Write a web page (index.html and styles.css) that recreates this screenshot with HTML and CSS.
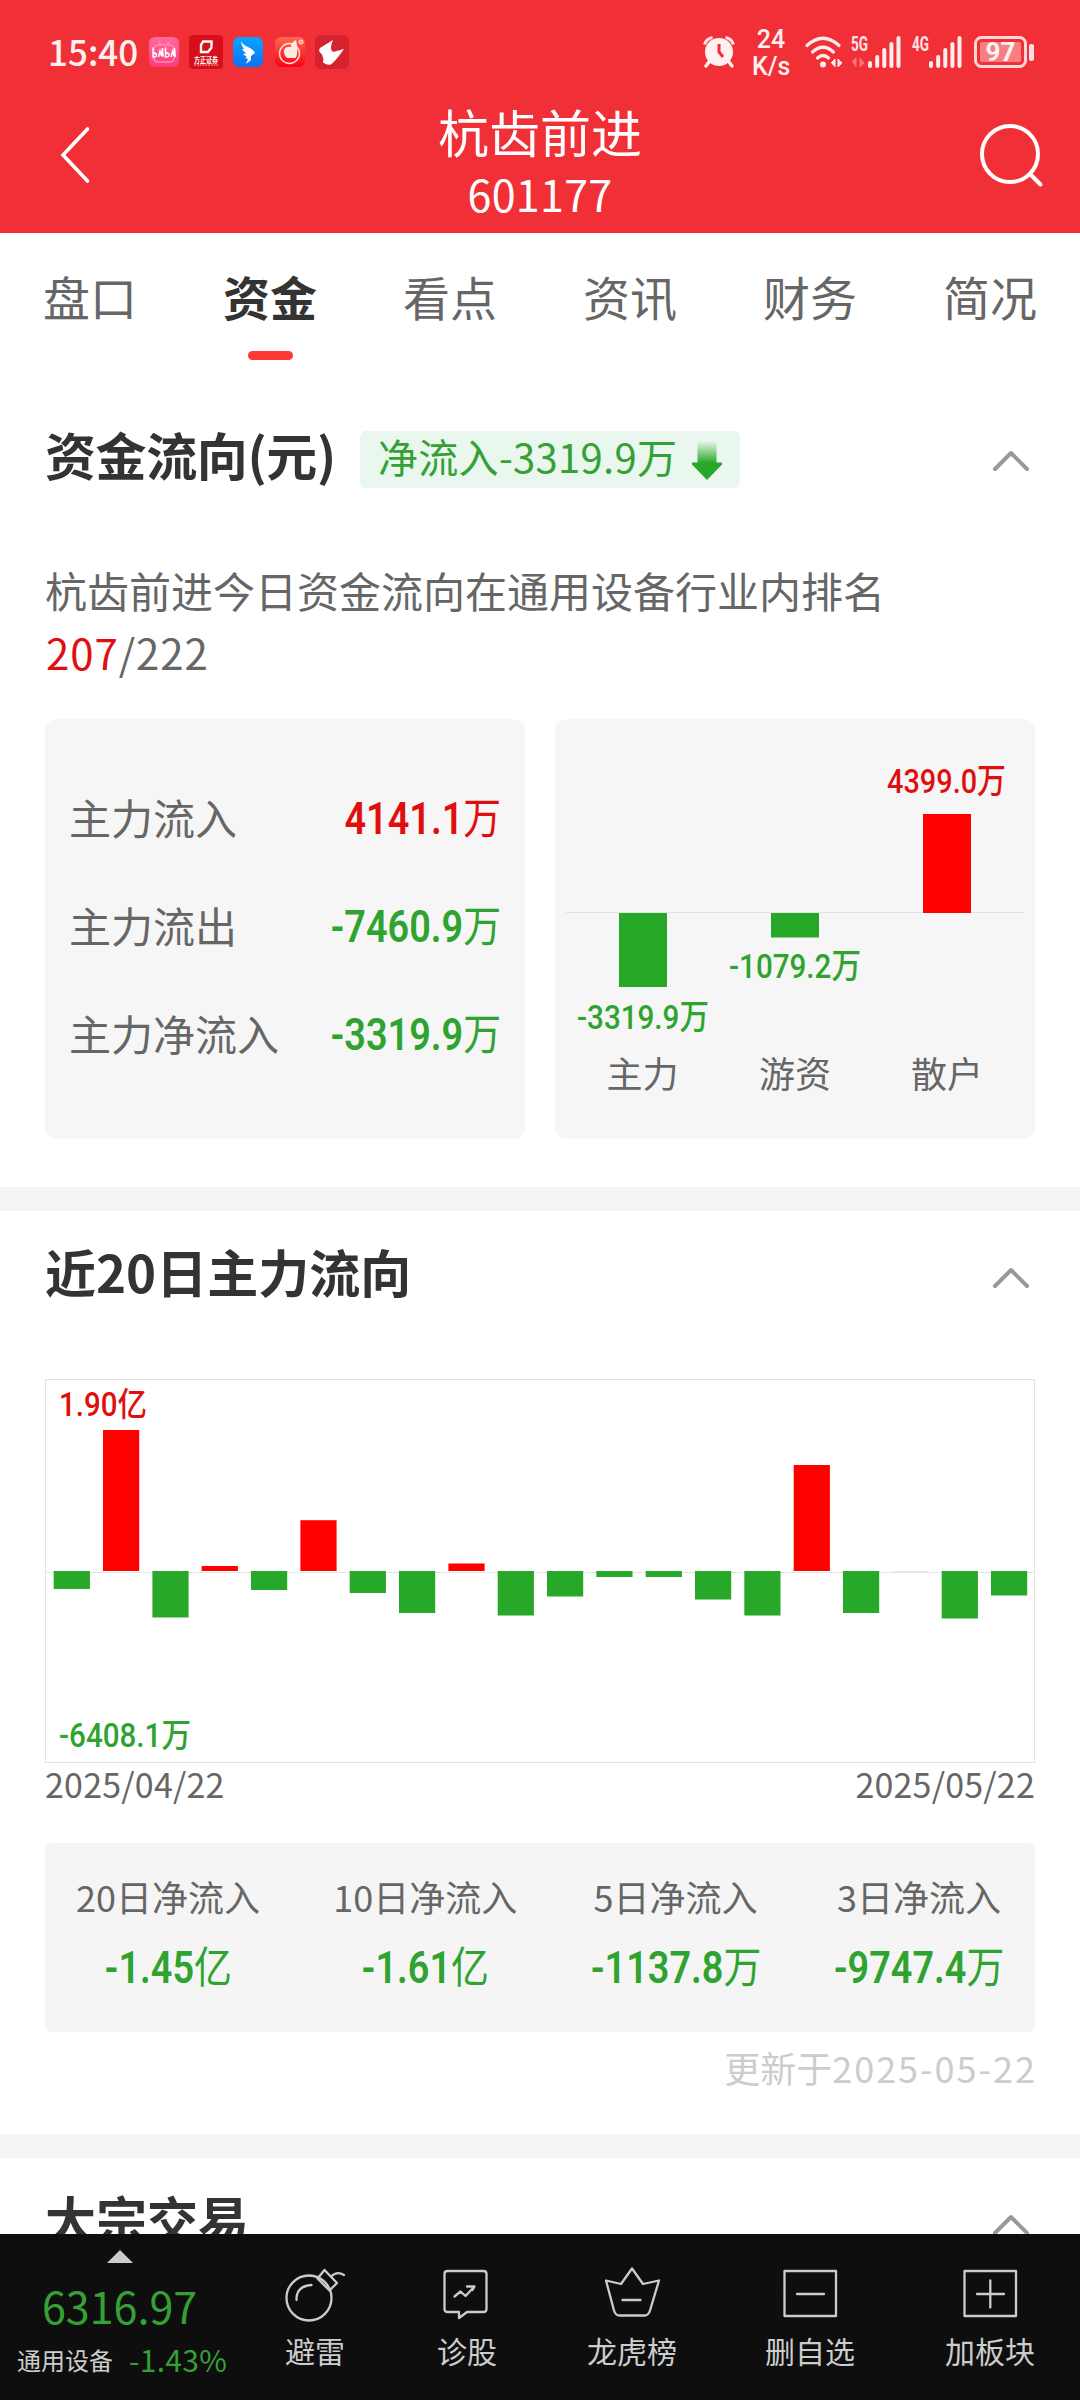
FILE: index.html
```html
<!DOCTYPE html>
<html lang="zh-CN">
<head>
<meta charset="utf-8">
<title>杭齿前进 601177</title>
<link rel="stylesheet" href="styles.css">
</head>
<body>
<div class="app">
  <header class="header">
    <div class="status">
      <div class="status-left">
        <span class="clock">15:40</span>
        <svg class="app-sm" viewBox="0 0 30 30"><defs><linearGradient id="pink" x2="0" y2="1"><stop stop-color="#ff6a9d"/><stop offset="1" stop-color="#fb3c7c"/></linearGradient></defs><rect width="30" height="30" rx="6" fill="url(#pink)"/><rect x="5" y="8" width="20" height="17" rx="4" fill="none" stroke="#ff8db4" stroke-width="1.6"/><path d="M10 5l2 3M20 5l-2 3" stroke="#ff8db4" stroke-width="1.6"/><path d="M4 10.500v9.500q4 .5 3.500-3l-3-1.500M9.500 20l1.500-6l1.500 5l1-8l.5 9M16.500 10.500v9.500q4 .5 3.500-3l-3-1.500M22 20l1.500-6l1.500 5l.5-8l.7 9" fill="none" stroke="#fff" stroke-width="1.500"/></svg>
        <svg class="app-lg" viewBox="0 0 34 34"><rect width="34" height="34" rx="4" fill="#d70f1b"/><path d="M14 6.500h8.500v6l-3.500 4.500h-7v-7z" fill="none" stroke="#fff" stroke-width="2.400"/><text x="17" y="27.500" text-anchor="middle" textLength="24" lengthAdjust="spacingAndGlyphs" class="tiny">方正证券</text><path d="M5 30h24" stroke="#f7b0b5" stroke-width="1" stroke-dasharray="2 .8"/></svg>
        <svg class="app-sm" viewBox="0 0 30 30"><defs><linearGradient id="blue" x2="0" y2="1"><stop stop-color="#0aa4ff"/><stop offset="1" stop-color="#0b72f5"/></linearGradient></defs><rect width="30" height="30" rx="6" fill="url(#blue)"/><path d="M8 4q2 4 7 6q6 3 7 6l-4 3v4l-5 4l2-5l-3-1l2-1l-4-3l3-.5l-4-4l2-.3q-3-4-3-8z" fill="#fff"/></svg>
        <svg class="app-sm" viewBox="0 0 30 30"><defs><linearGradient id="org" x2="0" y2="1"><stop stop-color="#ff6a4f"/><stop offset="1" stop-color="#fd0014"/></linearGradient></defs><rect width="30" height="30" rx="6" fill="url(#org)"/><circle cx="14.500" cy="16.500" r="10" fill="none" stroke="#ffe3dc" stroke-width="1.400"/><path d="M10 11q4-2 6-1q0-5 5-7l1 5q1 8-1 13h-9q-5-5-2-10z" fill="#ffeadf"/><circle cx="26" cy="5" r="2" fill="#ff9a8a" stroke="#fff" stroke-width=".8"/></svg>
        <svg class="app-lg" viewBox="0 0 34 34"><rect width="34" height="34" rx="6" fill="#d4222e"/><path d="M18 5L5 13q-2.500 3 2 6.500q2 4 1 8q4 3 8 2q5-4 13-15.500l-11 3q-4-3 0-12z" fill="#fff"/></svg>
      </div>
      <div class="status-right">
        <svg class="alarm" viewBox="0 0 32 32"><circle cx="16" cy="16" r="14" fill="#fff1f1"/><path d="M1.500 8.500q2-6 8-7M30.500 8.500q-2-6-8-7" stroke="#ffe3e4" stroke-width="3" fill="none"/><path d="M6 26l-3 4M26 26l3 4" stroke="#fff1f1" stroke-width="3.500" stroke-linecap="round"/><path d="M16 8v8l4 5" stroke="#f12f37" stroke-width="3" fill="none"/></svg>
        <div class="speed"><span>24</span><span>K/s</span></div>
        <svg class="wifi" viewBox="0 0 38 32"><g fill="none" stroke="#ffecec" stroke-width="3.200" stroke-linecap="round"><path d="M2 9.500Q18 -5 34 9.500"/><path d="M7.500 16Q18 6.500 28.500 16"/><path d="M12.500 22Q18 17 23.500 22"/></g><circle cx="18" cy="28.500" r="3" fill="#ffecec"/><path d="M26 27l4-4v8M33 23v8l4-4z" fill="#ffecec" stroke="#ffecec" stroke-width="1"/></svg>
        <svg class="signal" viewBox="0 0 50 32"><text x="0" y="15" textLength="17" lengthAdjust="spacingAndGlyphs" class="net">5G</text><path d="M1 26l4-4v9M9 22v9l4-4z" fill="#ff7478" stroke="#ff7478"/><path d="M19 27v3M26.200 21v9M33.300 14v16M40.400 8v22M47.500 2v28" stroke="#ffecec" stroke-width="4" stroke-linecap="round"/></svg>
        <svg class="signal four" viewBox="0 0 50 32"><text x="0" y="15" textLength="17" lengthAdjust="spacingAndGlyphs" class="net">4G</text><path d="M19 27v3M26.200 21v9M33.300 14v16M40.400 8v22M47.500 2v28" stroke="#ffecec" stroke-width="4" stroke-linecap="round"/></svg>
        <svg class="battery" viewBox="0 0 60 32"><rect x="1.500" y="1.500" width="50" height="29" rx="6" fill="none" stroke="#ffd6d8" stroke-width="3"/><rect x="6" y="6" width="41" height="20" rx="2" fill="#f67f84"/><rect x="55" y="8" width="5" height="17" rx="2" fill="#ffe0e1"/><text x="26.500" y="25" text-anchor="middle" class="bat">97</text></svg>
      </div>
    </div>
    <div class="titlebar">
      <svg class="back" viewBox="0 0 32 58"><path d="M29.500 3L5 29l24.500 26" fill="none" stroke="#fff" stroke-width="3.600" stroke-linecap="round"/></svg>
      <div class="stock"><h1>杭齿前进</h1><span>601177</span></div>
      <svg class="search" viewBox="0 0 64 64"><circle cx="31" cy="30" r="28" fill="none" stroke="#fff" stroke-width="4"/><path d="M51 50l10.500 10.500" stroke="#fff" stroke-width="4" stroke-linecap="round"/></svg>
    </div>
  </header>

  <main class="main">
    <nav class="tabs">
      <span>盘口</span><span class="active">资金</span><span>看点</span><span>资讯</span><span>财务</span><span>简况</span>
    </nav>

    <section class="flow">
      <div class="heading">
        <h2>资金流向(元)</h2>
        <div class="tag"><span>净流入-3319.9万</span>
          <svg viewBox="0 0 30 40"><defs><linearGradient id="down" x2="0" y2="1"><stop stop-color="#28a828" stop-opacity="0"/><stop offset="1" stop-color="#28a828"/></linearGradient></defs><path d="M5.500 0h19v22h-19z" fill="url(#down)"/><path d="M0 21.500h30v2L15 39L0 23.500z" fill="#28a828"/></svg>
        </div>
        <svg class="chev" viewBox="0 0 36 22"><path d="M2 20L18 4l16 16"/></svg>
      </div>
      <p class="rank">杭齿前进今日资金流向在通用设备行业内排名<br><span><b>207</b>/222</span></p>
      <div class="cards">
        <div class="card amounts">
          <div class="row"><span>主力流入</span><span class="value up">4141.1<i>万</i></span></div>
          <div class="row"><span>主力流出</span><span class="value down">-7460.9<i>万</i></span></div>
          <div class="row"><span>主力净流入</span><span class="value down">-3319.9<i>万</i></span></div>
        </div>
        <div class="card">
          <svg class="split" viewBox="0 0 480 420">
            <path d="M11 193.500h458" stroke="#e2e2e2"/>
            <path class="bar-down" d="M64 194h48v74H64zM216 194h48v24.500h-48z"/>
            <path class="bar-up" d="M368 95h48v99h-48z"/>
            <text class="din up" x="332" y="73.500" textLength="119" lengthAdjust="spacingAndGlyphs">4399.0万</text>
            <text class="din down" x="174" y="259" textLength="132" lengthAdjust="spacingAndGlyphs">-1079.2万</text>
            <text class="din down" x="22" y="310" textLength="132" lengthAdjust="spacingAndGlyphs">-3319.9万</text>
            <g class="names"><text x="87.500" y="369">主力</text><text x="240" y="369">游资</text><text x="392" y="369">散户</text></g>
          </svg>
        </div>
      </div>
    </section>

    <section class="recent">
      <div class="heading">
        <h2>近20日主力流向</h2>
        <svg class="chev" viewBox="0 0 36 22"><path d="M2 20L18 4l16 16"/></svg>
      </div>
      <svg class="history" viewBox="0 0 990 384">
        <rect x=".5" y=".5" width="989" height="383" fill="#fff" stroke="#e2e2e2"/>
        <path d="M1 193.500h988" stroke="#e4e4e4"/>
        <g class="bar-down">
          <rect x="8.700" y="192" width="36.200" height="18"/>
          <rect x="107.400" y="192" width="36.200" height="46.500"/>
          <rect x="206" y="192" width="36.200" height="19"/>
          <rect x="304.700" y="192" width="36.200" height="22"/>
          <rect x="354" y="192" width="36.200" height="42"/>
          <rect x="452.700" y="192" width="36.200" height="44.500"/>
          <rect x="502" y="192" width="36.200" height="25.500"/>
          <rect x="551.300" y="192" width="36.200" height="6"/>
          <rect x="600.700" y="192" width="36.200" height="6"/>
          <rect x="650" y="192" width="36.200" height="28.500"/>
          <rect x="699.300" y="192" width="36.200" height="44.500"/>
          <rect x="798" y="192" width="36.200" height="42"/>
          <rect x="847.300" y="192" width="36.200" height=".15"/>
          <rect x="896.700" y="192" width="36.200" height="47.500"/>
          <rect x="946" y="192" width="36.200" height="24.500"/>
        </g>
        <g class="bar-up">
          <rect x="58" y="51" width="36.200" height="141"/>
          <rect x="156.700" y="187" width="36.200" height="5"/>
          <rect x="255.400" y="141.200" width="36.200" height="50.800"/>
          <rect x="403.400" y="184.500" width="36.200" height="7.500"/>
          <rect x="748.700" y="86" width="36.200" height="106"/>
        </g>
        <text class="din small up" x="14" y="36.500" textLength="88" lengthAdjust="spacingAndGlyphs">1.90亿</text>
        <text class="din small down" x="14" y="368" textLength="132" lengthAdjust="spacingAndGlyphs">-6408.1万</text>
      </svg>
      <div class="dates"><span>2025/04/22</span><span>2025/05/22</span></div>
      <div class="sums">
        <div><span>20日净流入</span><span class="value down">-1.45<i>亿</i></span></div>
        <div><span>10日净流入</span><span class="value down">-1.61<i>亿</i></span></div>
        <div><span>5日净流入</span><span class="value down">-1137.8<i>万</i></span></div>
        <div><span>3日净流入</span><span class="value down">-9747.4<i>万</i></span></div>
      </div>
      <div class="updated">更新于<span>2025-05-22</span></div>
    </section>

    <section class="block">
      <div class="heading">
        <h2>大宗交易</h2>
        <svg class="chev" viewBox="0 0 36 22"><path d="M2 20L18 4l16 16"/></svg>
      </div>
    </section>
  </main>

  <footer class="bottom">
    <div class="index">
      <svg class="tri" viewBox="0 0 26 13"><path d="M13 0l13 13H0z" fill="#ccc"/></svg>
      <div class="points">6316.97</div>
      <div class="sector"><span>通用设备</span><span class="pct">-1.43%</span></div>
    </div>
    <div class="actions">
      <div><svg viewBox="0 0 60 56"><circle cx="24" cy="32" r="22.500"/><path d="M11.500 34Q11 20 26.500 19"/><path d="M32.500 12.500L39.500 4L52 17l-7.500 7.500z"/><path d="M46 10.500Q52 4.500 59 9"/></svg><span>避雷</span></div>
      <div><svg viewBox="0 0 60 56"><path d="M10.500 5h36q3 0 3 3v35q0 3-3 3H30l-8 6v-6H10.500q-3 0-3-3V8q0-3 3-3z"/><path d="M17.500 30.500l6-5l5 4.500l8.500-9M30 20.500h7.500l-2 3.500"/></svg><span>诊股</span></div>
      <div><svg viewBox="0 0 60 56"><path d="M30 2.500L41 18l16-3.500l-9 30q-1.500 5-5.500 5h-25q-4 0-5.500-5l-8-30L19 18z"/><path d="M20.500 34h18"/></svg><span>龙虎榜</span></div>
      <div><svg viewBox="0 0 60 56"><path d="M4.500 5h51.500v45H4.500zM17 28h27"/></svg><span>删自选</span></div>
      <div><svg viewBox="0 0 60 56"><path d="M4.500 5h51.500v45H4.500zM17 28h27M30.300 14.500v27"/></svg><span>加板块</span></div>
    </div>
  </footer>
</div>
</body>
</html>
```
FILE: styles.css
```css
* { box-sizing: border-box; }
body {
  margin: 0;
  background: #fff;
  color: #666;
  font-family: "Noto Sans CJK SC", sans-serif;
}
h1, h2, p { margin: 0; font-weight: 400; }
svg { display: block; flex: none; overflow: visible; }

.app { width: 1080px; height: 2400px; display: flex; flex-direction: column; overflow: hidden; }

/* header */
.header { height: 233px; background: #f12f37; color: #fff; flex: none; }
.status { height: 104px; display: flex; justify-content: space-between; padding: 0 46px 0 48px; }
.status-left { display: flex; align-items: center; }
.clock { font-size: 35px; line-height: 52px; width: 101px; margin-top: -2px; white-space: nowrap; color: #fff1f1; font-weight: 500; }
.app-sm { width: 30px; height: 30px; }
.app-lg { width: 34px; height: 34px; margin: 0 10px; }
.app-sm + .app-sm { margin-left: 12px; }
.tiny { font-size: 7.500px; font-weight: 700; fill: #fff; }
.status-right { display: flex; align-items: center; }
.alarm { width: 32px; height: 32px; margin-right: 17px; }
.speed { width: 38px; margin: 2px 15px 0 0; display: flex; flex-direction: column; text-align: center; font: 500 25px/27px Roboto, sans-serif; color: #fff1f1; }
.wifi { width: 38px; height: 32px; margin-right: 8px; }
.signal { width: 50px; height: 32px; }
.four { margin-left: 11px; }
.net { font: 700 20px Roboto, sans-serif; fill: #ffe3e4; }
.battery { width: 60px; height: 32px; margin-left: 12px; }
.bat { font: 700 26px Roboto, sans-serif; fill: #fff1f1; }
.titlebar { height: 129px; display: flex; justify-content: space-between; padding: 0 37px 0 58px; }
.back { width: 32px; height: 58px; margin-top: 22px; }
.search { width: 64px; height: 64px; margin-top: 20px; }
.stock { display: flex; flex-direction: column; align-items: center; padding-left: 11px; }
.stock h1 { font-size: 51px; line-height: 55px; height: 56px; }
.stock span { font-size: 43px; line-height: 66px; letter-spacing: .3px; }

/* tabs */
.main { flex: 1; overflow: hidden; }
.tabs { height: 151px; display: grid; grid-template-columns: repeat(6, 1fr); }
.tabs span { font-size: 47px; line-height: 126px; text-align: center; }
.tabs .active { color: #333; font-weight: 700; }
.tabs .active::after { content: ""; display: block; width: 45px; height: 9px; border-radius: 5px; background: #fa3a33; margin: -8px auto 0; }

/* sections */
section { padding: 0 45px; }
.heading { height: 120px; display: flex; align-items: center; color: #333; }
.heading h2 { font-size: 51px; font-weight: 700; line-height: 80px; white-space: nowrap; }
.chev { width: 36px; height: 22px; margin: 11px 6px 0 auto; fill: none; stroke: #999; stroke-width: 4; stroke-linecap: round; stroke-linejoin: round; }
.flow { padding-top: 10px; height: 803px; }
.flow h2 { width: 315px; letter-spacing: -.4px; }
.tag { width: 380px; height: 57px; margin-top: 11px; padding-left: 18px; display: flex; align-items: center; background: #e9f7ee; border-radius: 6px; color: #35a035; font-size: 40px; white-space: nowrap; }
.tag span { width: 314px; line-height: 50px; margin-top: -8px; letter-spacing: .3px; }
.tag svg { width: 30px; height: 40px; margin-top: 2px; }
.rank { margin-top: 45px; font-size: 42px; line-height: 62px; height: 160px; }
.rank b { font-weight: 400; color: #e00f0f; }
.rank span { letter-spacing: .9px; margin-left: 1px; }
.cards { display: grid; grid-template-columns: 480px 480px; gap: 30px; }
.card { height: 420px; background: #f6f6f6; border-radius: 12px; }
.amounts { padding: 44px 24px 0; font-size: 42px; }
.row { height: 108px; display: flex; align-items: center; justify-content: space-between; line-height: 60px; }
.value { display: inline-block; font: 600 43.500px/60px Roboto, "Noto Sans CJK SC", sans-serif; white-space: nowrap; transform: scaleX(.87); transform-origin: 100% 50%; }
.value i { font-style: normal; font-weight: 400; }
.row .value { margin: 6px 0 0 -30px; }
.up { color: #e00f0f; fill: #e00f0f; }
.down { color: #2fa32f; fill: #2fa32f; }
.bar-up { fill: #f00; }
.bar-down { fill: #28a828; }
.split { width: 480px; height: 420px; }
.din { font: 500 34px Roboto, "Noto Sans CJK SC", sans-serif; }
.din.small { font-size: 33px; }
.names { font-size: 36px; fill: #666; text-anchor: middle; }

.recent { height: 947px; border-top: 24px solid #f5f5f5; }
.block { border-top: 24px solid #f5f5f5; }
.history { width: 990px; height: 384px; margin-top: 48px; }
.dates { display: flex; justify-content: space-between; font-size: 34px; line-height: 42px; letter-spacing: .2px; }
.sums { height: 189px; margin-top: 38px; padding: 0 31px; display: flex; justify-content: space-between; background: #f5f5f5; border-radius: 6px; }
.sums > div { display: flex; flex-direction: column; align-items: center; font-size: 36px; line-height: 54px; padding-top: 26px; }
.sums .value { margin: 16px -13px 0; transform-origin: 50% 50%; }
.updated { text-align: right; font-size: 36px; line-height: 54px; padding-top: 8px; color: #ccc; }
.updated span { letter-spacing: 2px; margin-right: -2px; }

/* bottom bar */
.bottom { height: 166px; flex: none; display: flex; background: #0e0e0e; color: #ccc; }
.index { width: 285px; padding-top: 16px; }
.tri { width: 26px; height: 13px; margin-left: 107px; }
.points { margin: 12px 0 0 42px; font-size: 43px; line-height: 60px; height: 61px; color: #35a035; }
.sector { display: flex; align-items: center; padding-left: 17px; margin-top: 4px; font-size: 24px; line-height: 40px; white-space: nowrap; }
.pct { margin: -2px 0 0 16px; font-size: 30px; letter-spacing: .3px; color: #35a035; }
.actions { width: 750px; display: flex; justify-content: space-between; }
.actions > div { display: flex; flex-direction: column; align-items: center; padding-top: 32px; font-size: 30px; line-height: 44px; }
.actions > div:nth-child(2), .actions > div:nth-child(3) { padding-left: 2px; margin-right: -2px; }
.actions svg { width: 60px; height: 56px; margin-bottom: 6px; fill: none; stroke: #ccc; stroke-width: 2.300; stroke-linejoin: round; stroke-linecap: round; }
```
